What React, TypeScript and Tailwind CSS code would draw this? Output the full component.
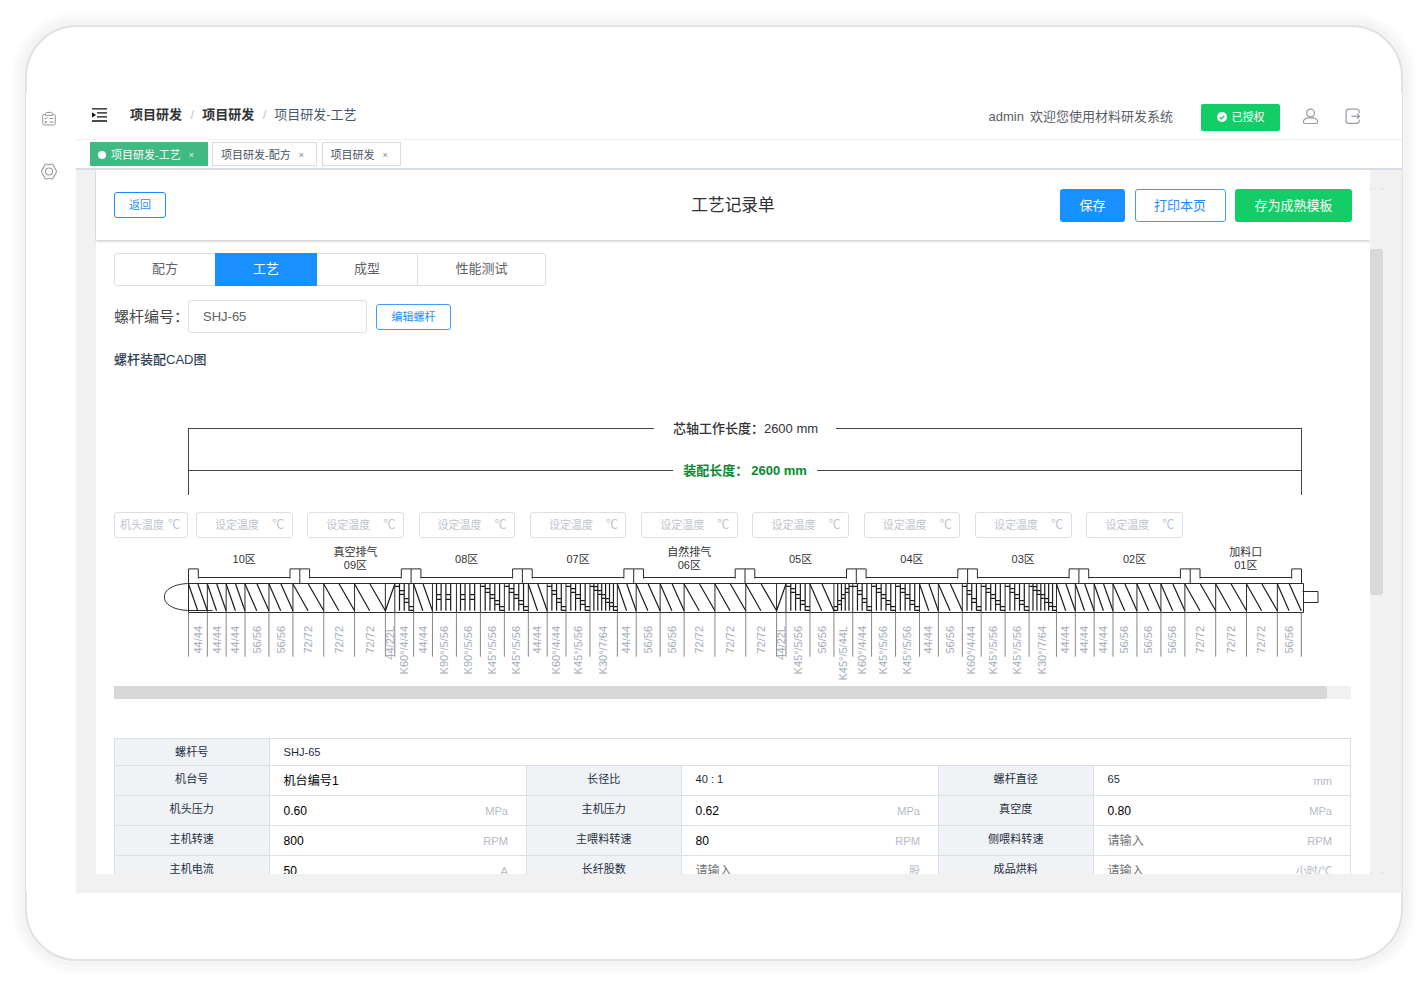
import React from "react";

const SCALE = 1112.8 / 2600;

type Kind = "fwd" | "rev" | "knead" | "neutral" | "kneadRev";
type Segment = { label: string; len: number; kind: Kind; discs: number };

const LABELS = [
  "44/44", "44/44", "44/44", "56/56", "56/56", "72/72", "72/72", "72/72", "44/22L", "K60°/4/44",
  "44/44", "K90°/5/56", "K90°/5/56", "K45°/5/56", "K45°/5/56", "44/44", "K60°/4/44", "K45°/5/56",
  "K30°/7/64", "44/44", "56/56", "56/56", "72/72", "72/72", "72/72", "44/22L", "K45°/5/56", "56/56",
  "K45°/5/44L", "K60°/4/44", "K45°/5/56", "K45°/5/56", "44/44", "56/56", "K60°/4/44", "K45°/5/56",
  "K45°/5/56", "K30°/7/64", "44/44", "44/44", "44/44", "56/56", "56/56", "56/56", "72/72", "72/72",
  "72/72", "56/56",
];

const SEGMENTS: Segment[] = LABELS.map((label) => {
  const parts = label.split("/");
  const len = parseInt(parts[parts.length - 1], 10);
  const left = label.endsWith("L");
  if (label.startsWith("K")) {
    const kind: Kind = label.startsWith("K90") ? "neutral" : left ? "kneadRev" : "knead";
    return { label, len, kind, discs: parseInt(parts[1], 10) };
  }
  return { label, len, kind: left ? "rev" : "fwd", discs: 0 };
});

const ZONES = [
  ["10区"], ["真空排气", "09区"], ["08区"], ["07区"], ["自然排气", "06区"],
  ["05区"], ["04区"], ["03区"], ["02区"], ["加料口", "01区"],
];

const TOP = 15.5;
const BOTTOM = 44.5;

function segmentPath(s: Segment, x: number, w: number) {
  const t = TOP + 0.5;
  const b = BOTTOM - 1.8;
  if (s.kind === "fwd") {
    return `M${x} ${t}L${x + w * 0.49} ${b}M${x + w * 0.5} ${t}L${x + w} ${b}`;
  }
  if (s.kind === "rev") return `M${x} ${b}L${x + w} ${t}`;
  let d = "";
  if (s.kind === "neutral") {
    for (const f of [0.17, 0.36, 0.56, 0.76]) d += `M${x + w * f} ${t}V${b}`;
    for (const f of [0.17, 0.56]) {
      d += `M${x + w * f} 26.7h${w * 0.2}M${x + w * f} 31.3h${w * 0.2}`;
    }
    return d;
  }
  const dw = w / s.discs;
  for (let i = 0; i < s.discs; i++) {
    const step = s.kind === "kneadRev" ? s.discs - 1 - i : i;
    const low = 18.4 + (step * 24) / (s.discs - 1);
    const dx = x + i * dw;
    if (i > 0) d += `M${dx} ${t}V${b}`;
    d += `M${dx} ${low}h${dw}`;
    if (step > 0) d += `M${dx} ${low - 3.7}h${dw}`;
  }
  return d;
}

function ScrewDrawing() {
  const x0 = 74.5;
  let x = x0;
  const placed = SEGMENTS.map((s) => {
    const w = s.len * SCALE;
    const item = { s, x, w };
    x += w;
    return item;
  });
  const zw = 111.3;
  return (
    <svg className="block shrink-0" width="1237" height="90" viewBox="0 0 1237 90" fill="none" stroke="#2b2b2b" strokeWidth="1">
      {ZONES.map((_, i) => {
        const z = x0 + i * zw;
        return (
          <path key={i} d={`M${z} ${TOP}V.9h9.8V10.500M${z + 9.8} 9.500H${z + 101.5}M${z + 101.5} 10.500V.9h9.8`} />
        );
      })}
      <path d={`M${x0 + 10 * zw} .9V${TOP}`} />
      <path d={`M${x0} ${TOP}H1189.5V${BOTTOM}H${x0}`} />
      <path d="M1188.5 23.5H1204V34.5H1189.5" />
      <path d="M76 15.5C63 15.5 50.4 20 50.4 29S63 42.5 76 42.5H98.5" />
      {placed.map(({ s, x: sx, w }, i) => (
        <g key={i}>
          <path d={`M${sx} ${TOP}V${BOTTOM}`} />
          <path d={segmentPath(s, sx, w)} stroke="#1c1c1c" strokeWidth="1.200" />
          <path d={`M${sx} ${BOTTOM}V88.7`} stroke="#888" />
        </g>
      ))}
      <path d={`M${x} ${BOTTOM}V88.7`} stroke="#777" />
    </svg>
  );
}

function TempInput({ first }: { first?: boolean }) {
  return first ? (
    <div className="flex h-[26px] w-[74px] shrink-0 items-center gap-[4px] rounded-[3px] border border-[#dcdfe6] pl-[5px] text-[#c0c4cc]">
      <span>机头温度</span>
      <span className="text-[12px]">℃</span>
    </div>
  ) : (
    <div className="flex h-[26px] w-[96.5px] shrink-0 items-center justify-between rounded-[3px] border border-[#dcdfe6] pr-[7.5px] pl-[18px] text-[#c0c4cc]">
      <span>设定温度</span>
      <span className="text-[12px]">℃</span>
    </div>
  );
}

type Cell = { label: string; value: string; unit?: string; kind?: "plain" | "empty" };
const ROWS: Cell[][] = [
  [{ label: "机台号", value: "机台编号1" }, { label: "长径比", value: "40 : 1", kind: "plain" }, { label: "螺杆直径", value: "65", unit: "mm", kind: "plain" }],
  [{ label: "机头压力", value: "0.60", unit: "MPa" }, { label: "主机压力", value: "0.62", unit: "MPa" }, { label: "真空度", value: "0.80", unit: "MPa" }],
  [{ label: "主机转速", value: "800", unit: "RPM" }, { label: "主喂料转速", value: "80", unit: "RPM" }, { label: "侧喂料转速", value: "请输入", unit: "RPM", kind: "empty" }],
  [{ label: "主机电流", value: "50", unit: "A" }, { label: "长纤股数", value: "请输入", unit: "股", kind: "empty" }, { label: "成品烘料", value: "请输入", unit: "小时/℃", kind: "empty" }],
];

function ValueCell({ cell }: { cell: Cell }) {
  const tone =
    cell.kind === "plain"
      ? "pb-[3px] text-[11.1px] text-[#1f2d3d]"
      : cell.kind === "empty"
        ? "pt-[1px] text-[12.1px] text-[#757575]"
        : "pt-[1px] text-[12.1px] text-black";
  return (
    <div className="flex items-center justify-between border-r border-b border-[#dcdfe6] pr-[18px] pl-[14px]">
      <span className={tone}>{cell.value}</span>
      <span className="pt-[2px] text-[11.1px] text-[#b4bac5]">{cell.unit}</span>
    </div>
  );
}

function LabelCell({ text, centered }: { text: string; centered?: boolean }) {
  return (
    <div
      className={`flex items-center justify-center border-r border-b border-[#dcdfe6] bg-[#eff3f6] text-[11.1px] text-[#1f2d3d] ${centered ? "pb-0" : "pb-[3px]"}`}
    >
      {text}
    </div>
  );
}

function Dots() {
  return (
    <div className="flex justify-between">
      <i className="size-[2px] rounded-full bg-[#dedede]" />
      <i className="size-[2px] rounded-full bg-[#dedede]" />
    </div>
  );
}

function Sidebar() {
  return (
    <aside className="flex w-[50px] shrink-0 flex-col bg-white pl-[15px]">
      <svg className="mt-[19px]" width="16" height="16" viewBox="0 0 16 16" fill="none" stroke="#96999f" strokeWidth="1">
        <path d="M4.6 3.5H3.200a1.500 1.500 0 0 0-1.500 1.500v7.500A1.500 1.500 0 0 0 3.200 14h9.600a1.500 1.500 0 0 0 1.500-1.500V5a1.500 1.500 0 0 0-1.500-1.500h-1.400M4.6 4.400V2.500c0-.7.4-1.100 1.100-1.100h4.600c.7 0 1.100.4 1.100 1.100v1.900z" />
        <path d="M3.800 7.100l1 1 1.700-1.900M8.500 7.500h4M8.500 11.200h4M4.200 10.400h1.300v1.400H4.200z" />
      </svg>
      <svg className="mt-[36px]" width="16" height="17" viewBox="0 0 16 17" fill="none" stroke="#96999f" strokeWidth="1.100">
        <path d="M3.900 1.700Q4.700.6 5.900 1.300Q8 2.300 10.100 1.300Q11.300.6 12.100 1.700L12.900 3.500Q13.400 4.600 14.600 6.200Q16.100 8.500 14.600 10.800Q13.400 12.400 12.900 13.500L12.100 15.300Q11.300 16.400 10.100 15.700Q8 14.700 5.900 15.700Q4.700 16.400 3.900 15.300L3.100 13.500Q2.600 12.400 1.400 10.800Q-.1 8.500 1.400 6.200Q2.600 4.600 3.100 3.500z" />
        <circle cx="8" cy="8.500" r="3.500" />
      </svg>
    </aside>
  );
}

function Header() {
  return (
    <header className="flex h-[48px] shrink-0 items-center border-b border-[#f0f0f0] bg-white pl-[16px]">
      <svg className="-mt-[2px]" width="15" height="14" viewBox="0 0 15 14" fill="#111">
        <path d="M0 .2h15v1.400H0zM5 4.300h10v1.300H5zM5 8.300h10v1.300H5zM0 12.300h15v1.400H0zM0 4.300l4 2.600L0 9.500z" />
      </svg>
      <nav className="-mt-[2px] ml-[23px] flex text-[13px] leading-[16px] text-[#48576a]">
        <span className="font-bold text-[#303133]">项目研发</span>
        <span className="mr-[8px] ml-[8.500px] text-[#c0c4cc]">/</span>
        <span className="font-bold text-[#303133]">项目研发</span>
        <span className="mr-[8px] ml-[8.500px] text-[#c0c4cc]">/</span>
        <span>项目研发-工艺</span>
      </nav>
      <div className="mr-[41px] ml-auto flex items-center pt-[3px]">
        <span className="text-[13px] whitespace-pre text-[#5a5e66]">admin</span>
        <span className="ml-[6px] text-[13px] text-[#5a5e66]">欢迎您使用材料研发系统</span>
        <button className="ml-[28px] flex h-[27px] w-[79px] items-center justify-center gap-[5px] rounded-[2px] bg-[#13ce66] text-[11px] text-white">
          <svg width="10" height="10" viewBox="0 0 10 10">
            <circle cx="5" cy="5" r="5" fill="#fff" />
            <path d="M2.700 5.200l1.700 1.600L7.400 3.600" fill="none" stroke="#13ce66" strokeWidth="1.300" />
          </svg>
          已授权
        </button>
        <svg className="-mt-[2px] ml-[22px]" width="17" height="17" viewBox="0 0 17 17" fill="none" stroke="#999ca3" strokeWidth="1.200">
          <circle cx="8.500" cy="5" r="3.900" />
          <path d="M5.600 9.900C3 10.400 1.400 12.100 1.400 14.100c0 .9.500 1.400 1.300 1.400h11.600c.8 0 1.300-.5 1.300-1.400 0-2-1.600-3.700-4.200-4.200z" />
        </svg>
        <svg className="-mt-[2px] ml-[26px]" width="16" height="17" viewBox="0 0 16 17" fill="none" stroke="#999ca3" strokeWidth="1.200">
          <path d="M14.200 5V3.800c0-1.700-.9-2.600-2.600-2.600H3.700C2 1.200 1.100 2.100 1.100 3.800v8.900c0 1.700.9 2.600 2.600 2.600h7.900c1.700 0 2.600-.9 2.600-2.600v-1.200M6.500 8.300h8M12 5.800l2.600 2.500L12 10.800" />
        </svg>
      </div>
    </header>
  );
}

function TagBar() {
  return (
    <div className="flex h-[30px] shrink-0 items-start gap-[4.500px] border-b-2 border-[#d8dce5] bg-white pt-[2px] pl-[14px] text-[11px] text-[#495060]">
      <div className="flex h-[24px] w-[117.500px] items-center bg-[#42b983] pt-[2px] pl-[8px] text-white">
        <i className="mr-[5px] size-[8px] rounded-full bg-white" />
        项目研发-工艺
        <span className="ml-[8px] pt-[1px] text-[9px] text-white/80">×</span>
      </div>
      <div className="flex h-[24px] w-[105px] items-center border border-[#d8dce5] pt-[2px] pl-[8px]">
        项目研发-配方
        <span className="ml-[8px] pt-[1px] text-[9px] text-[#7f8590]">×</span>
      </div>
      <div className="flex h-[24px] w-[79.500px] items-center border border-[#d8dce5] pt-[2px] pl-[8px]">
        项目研发
        <span className="ml-[8px] pt-[1px] text-[9px] text-[#7f8590]">×</span>
      </div>
    </div>
  );
}

export default function App() {
  return (
    <div className="h-[986px] w-[1428px] overflow-hidden bg-white pt-[25px] pl-[25px] font-['Liberation_Sans','Noto_Sans_CJK_SC',sans-serif]">
      <div className="h-[936px] w-[1378px] rounded-[52px] border-2 border-[#e1e1e1] bg-white pt-[65px] shadow-[0_0_0_5px_#f4f4f4,0_0_5px_11px_#f8f8f8]">
        <div className="-mx-px flex h-[801px]">
          <Sidebar />
          <div className="flex min-w-0 flex-1 flex-col bg-[#f1f1f1]">
            <Header />
            <TagBar />
            <main className="flex h-[704px] w-[1308px] pl-[19px]">
              <div className="flex w-[1275px] shrink-0 flex-col overflow-hidden">
                <div className="z-10 ml-px flex h-[70px] shrink-0 items-center bg-white pr-[18px] pl-[18px] shadow-[0_1px_3px_rgba(0,0,0,0.25)]">
                  <div className="flex-1">
                    <button className="block h-[26px] w-[52px] rounded-[3px] border border-[#1890ff] text-[11px] leading-[24px] text-[#1890ff]">返回</button>
                  </div>
                  <h1 className="pt-[2px] text-[16.700px] leading-[22px] text-[#303133]">工艺记录单</h1>
                  <div className="flex flex-1 justify-end gap-[9.500px] text-[13px] leading-[31px]">
                    <button className="h-[33px] w-[65px] rounded-[3px] bg-[#1890ff] text-white">保存</button>
                    <button className="h-[33px] w-[91px] rounded-[3px] border border-[#409eff] text-[#1890ff]">打印本页</button>
                    <button className="h-[33px] w-[117px] rounded-[3px] bg-[#13ce66] text-white">存为成熟模板</button>
                  </div>
                </div>

                <div className="ml-px flex min-h-0 flex-1 flex-col overflow-hidden bg-white pt-[13px] pl-[18px] text-[11px]">
                  <div className="flex h-[33px] w-[432px] shrink-0 rounded-[3px] border border-[#dcdfe6] text-center text-[13px] leading-[30px] text-[#606266]">
                    <span className="w-[100px]">配方</span>
                    <span className="-my-px w-[102px] bg-[#1890ff] leading-[32px] text-white">工艺</span>
                    <span className="w-[101px] border-r border-[#dcdfe6]">成型</span>
                    <span className="flex-1">性能测试</span>
                  </div>

                  <div className="mt-[14px] flex h-[33px] shrink-0 items-center">
                    <span className="w-[74px] pt-[1px] text-[15px] whitespace-nowrap text-[#48494c]">螺杆编号：</span>
                    <div className="h-[33px] w-[179px] rounded-[3px] border border-[#dcdfe6] pl-[14px] text-[13px] leading-[31px] text-[#606266]">SHJ-65</div>
                    <button className="ml-[9px] h-[26px] w-[75px] rounded-[3px] border border-[#409eff] text-[11px] leading-[24px] text-[#1890ff]">编辑螺杆</button>
                  </div>

                  <p className="mt-[17px] h-[20px] shrink-0 text-[13px] leading-[20px] font-medium text-[#304156]">螺杆装配CAD图</p>

                  <div className="mt-[58px] ml-[74px] flex h-[67px] w-[1114px] shrink-0 flex-col border-x border-[#444] text-[13px] text-[#333]">
                    <div className="flex h-px items-center">
                      <i className="h-px flex-1 bg-[#444]" />
                      <span className="ml-[19px] font-medium">芯轴工作长度：</span>
                      <span className="mr-[18px]">2600 mm</span>
                      <i className="h-px flex-1 bg-[#444]" />
                    </div>
                    <div className="mt-[41px] flex h-px items-center font-bold text-[#078a30]">
                      <i className="h-px flex-1 bg-[#444]" />
                      <span className="ml-[10px]">装配长度：</span>
                      <span className="mr-[10px] ml-[3px]">2600 mm</span>
                      <i className="h-px flex-1 bg-[#444]" />
                    </div>
                  </div>

                  <div className="mt-[17px] flex shrink-0">
                    <TempInput first />
                    <div className="ml-[8px] flex gap-[14.800px]">
                      {ZONES.slice(1).map((_, i) => (
                        <TempInput key={i} />
                      ))}
                    </div>
                  </div>

                  <div className="mt-[8px] ml-[74.500px] flex h-[26px] w-[1113px] shrink-0 text-center leading-[13px] text-[#333]">
                    {ZONES.map((z) => (
                      <div key={z[z.length - 1]} className="flex flex-1 flex-col justify-center">
                        {z.map((line) => (
                          <span key={line}>{line}</span>
                        ))}
                      </div>
                    ))}
                  </div>

                  <div className="-mt-[4px] shrink-0">
                    <ScrewDrawing />
                    <div className="-mt-[32px] ml-[74.800px] flex h-[54px] w-[1113px] items-start">
                      {SEGMENTS.map((s, i) => (
                        <div key={i} className="flex shrink-0 justify-center" style={{ width: s.len * SCALE }}>
                          <span className="shrink-0 rotate-180 leading-[13px] whitespace-nowrap text-[#a3abb8] [text-orientation:sideways] [writing-mode:vertical-rl]">
                            {s.label}
                          </span>
                        </div>
                      ))}
                    </div>
                  </div>

                  <div className="mt-[6px] h-[13px] w-[1237px] shrink-0 bg-[#f1f1f1]">
                    <div className="h-[13px] w-[1213px] rounded-r-[3px] bg-[#d8d8d8]" />
                  </div>

                  <div className="mt-[39px] w-[1237px] shrink-0 border-t border-l border-[#dcdfe6]">
                    <div className="grid h-[27px] grid-cols-[154.500px_1fr]">
                      <LabelCell text="螺杆号" centered />
                      <div className="flex items-center border-r border-b border-[#dcdfe6] pl-[14px] text-[11.100px] text-[#1f2d3d]">SHJ-65</div>
                    </div>
                    {ROWS.map((row) => (
                      <div key={row[0].label} className="grid h-[30px] grid-cols-[154.500px_257.500px_154.500px_257.500px_154.500px_1fr]">
                        {row.map((cell) => (
                          <React.Fragment key={cell.label}>
                            <LabelCell text={cell.label} />
                            <ValueCell cell={cell} />
                          </React.Fragment>
                        ))}
                      </div>
                    ))}
                  </div>
                </div>
              </div>

              <div className="mt-[18px] flex h-[686px] w-[13px] flex-col">
                <Dots />
                <div className="mt-[59px] mb-auto h-[346px] rounded-[3px] bg-[#d9d9d9]" />
                <Dots />
              </div>
            </main>
          </div>
        </div>
      </div>
    </div>
  );
}
